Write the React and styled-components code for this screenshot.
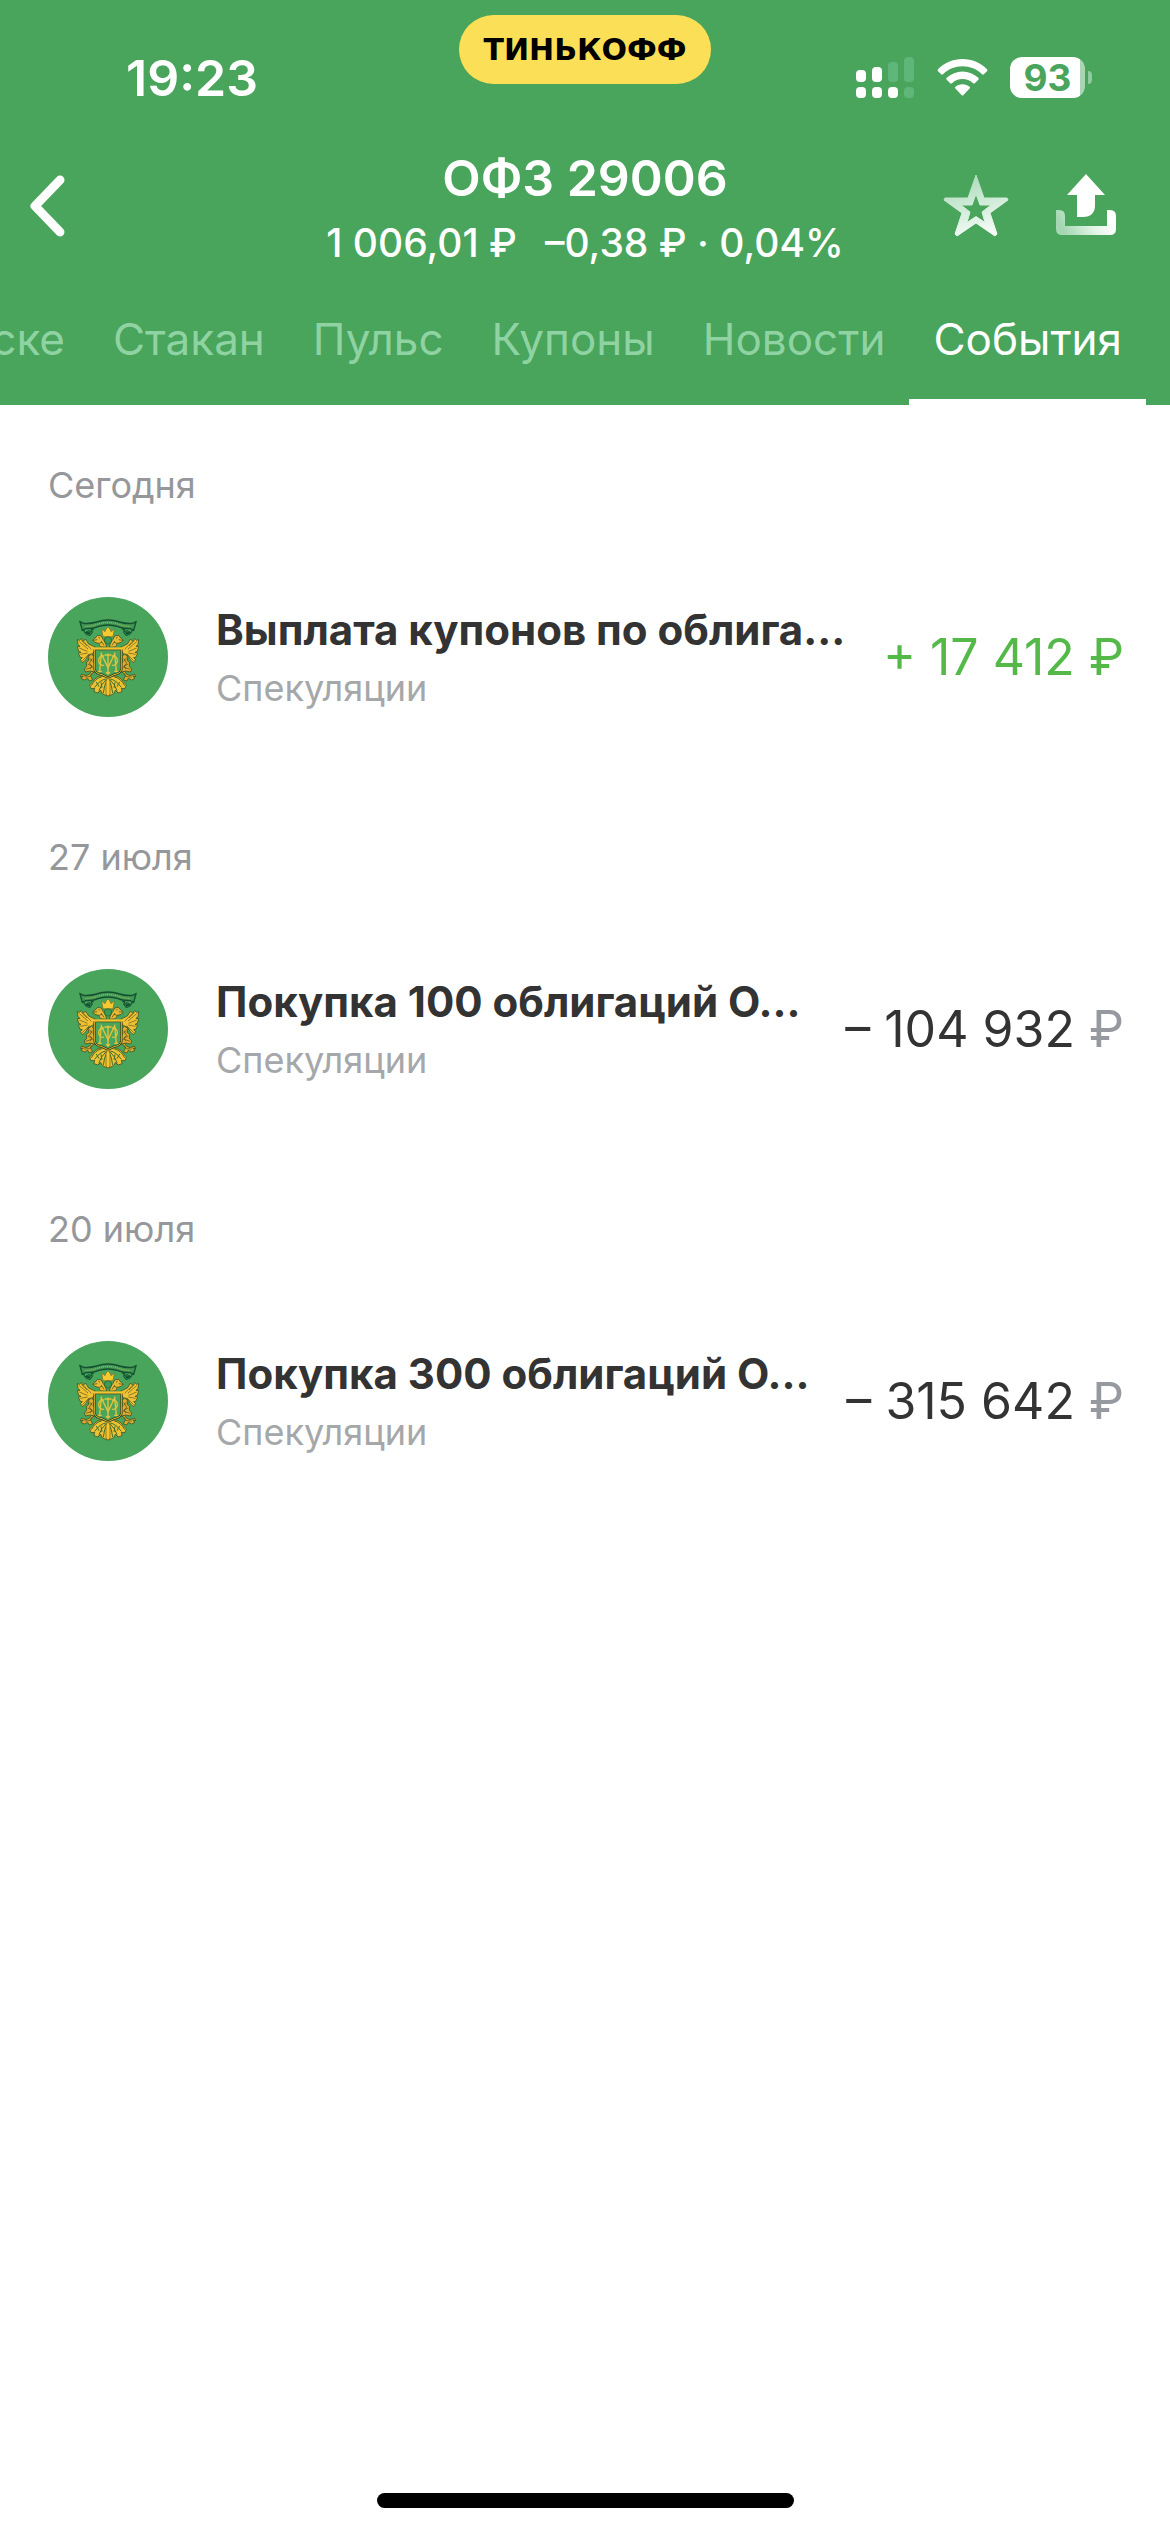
import styled, { createGlobalStyle } from "styled-components";

const GlobalStyle = createGlobalStyle`
  * {
    box-sizing: border-box;
  }

  body {
    margin: 0;
    background: #ffffff;
    font-family: Inter, "Liberation Sans", sans-serif;
  }

  button {
    padding: 0;
    border: none;
    background: none;
    color: inherit;
    font: inherit;
    cursor: pointer;
  }
`;

const Screen = styled.div`
  min-height: 100vh;

  display: flex;
  flex-direction: column;
`;

const Header = styled.header`
  background: #49a45c;
  color: #ffffff;
`;

const StatusBar = styled.div`
  height: 148px;
  padding-top: 15px;

  display: grid;
  grid-template-columns: 1fr auto 1fr;
  align-items: start;
`;

const Clock = styled.time`
  padding: 32px 0 0 126px;

  font-size: 50px;
  font-weight: 600;
  line-height: 62px;
`;

const Brand = styled.div`
  height: 69px;
  padding: 0 24px;
  border-radius: 35px;
  background: #fbdf56;
  color: #000000;

  font-family: "DejaVu Sans", sans-serif;
  font-size: 30px;
  font-weight: 700;
  line-height: 69px;
`;

const StatusIcons = styled.div`
  padding: 42px 78px 0 0;

  display: flex;
  justify-content: flex-end;
  gap: 22px;
`;

const Battery = styled.div`
  display: flex;
  align-items: center;
  gap: 3px;
`;

const BatteryLevel = styled.div`
  width: 75px;
  height: 41px;
  border-radius: 12px;
  background: linear-gradient(to right, #ffffff 93%, #a9d5b3 93%);
  color: #49a45c;

  font-size: 37px;
  font-weight: 700;
  line-height: 41px;
  text-align: center;
`;

const BatteryTip = styled.span`
  width: 4px;
  height: 13px;
  border-radius: 0 4px 4px 0;
  background: #8fcb9c;
`;

const NavBar = styled.nav`
  padding: 0 52px 0 26px;

  display: grid;
  grid-template-columns: 1fr auto 1fr;
  align-items: center;
`;

const IconButton = styled.button`
  && {
    padding-bottom: 4px;
  }

  display: flex;
  justify-self: start;
`;

const Actions = styled.div`
  display: flex;
  justify-content: flex-end;
  gap: 44px;
`;

const Heading = styled.div`
  padding-left: 26px;

  display: flex;
  flex-direction: column;
  align-items: center;
  gap: 12px;
`;

const Title = styled.h1`
  margin: 0;

  font-size: 50px;
  font-weight: 600;
  line-height: 60px;
`;

const Price = styled.p`
  margin: 0;

  display: flex;
  gap: 28px;

  font-size: 39px;
  font-weight: 500;
  line-height: 46px;
  white-space: nowrap;
`;

const Tabs = styled.div`
  padding-right: 24px;
  overflow: hidden;

  display: flex;
  justify-content: flex-end;
`;

const Tab = styled.button`
  && {
    flex: none;
    padding: 46px 24px 33px;
    border-bottom: 6px solid ${({ $active }) => ($active ? "#ffffff" : "transparent")};
    color: ${({ $active }) => ($active ? "#ffffff" : "#8fd3a3")};

    font-size: 44px;
    line-height: 54px;
  }
`;

const Day = styled.section`
  padding: 58px 46px 60px 48px;

  display: flex;
  flex-direction: column;
  gap: 90px;
`;

const DayTitle = styled.h2`
  margin: 0;
  color: #95979b;

  font-size: 36px;
  font-weight: 400;
  line-height: 44px;
`;

const Operation = styled.article`
  display: flex;
  align-items: center;
`;

const OperationText = styled.div`
  min-width: 0;
  margin-left: 48px;
  flex: 1;

  display: flex;
  flex-direction: column;
  gap: 10px;
`;

const OperationName = styled.h3`
  margin: 0;
  color: #333333;

  font-size: 42px;
  font-weight: 700;
  line-height: 52px;
  white-space: nowrap;
`;

const Account = styled.p`
  margin: 0;
  color: #a5a7aa;

  font-size: 36px;
  line-height: 44px;
`;

const Amount = styled.div`
  color: ${({ $income }) => ($income ? "#54b948" : "#333333")};

  font-size: 50px;
  line-height: 60px;
  white-space: nowrap;
`;

const Currency = styled.span`
  color: ${({ $income }) => ($income ? "inherit" : "#9699a0")};
`;

const HomeIndicator = styled.div`
  width: 417px;
  height: 15px;
  margin: auto auto 24px;
  border-radius: 8px;
  background: #000000;
`;

const tabs = ["ске", "Стакан", "Пульс", "Купоны", "Новости", "События"];

const days = [
  { date: "Сегодня", name: "Выплата купонов по облига...", amount: "+ 17 412", income: true },
  { date: "27 июля", name: "Покупка 100 облигаций О...", amount: "– 104 932" },
  { date: "20 июля", name: "Покупка 300 облигаций О...", amount: "– 315 642" },
];

const SignalIcon = () => (
  <svg width="59" height="41" viewBox="0 0 59 41" fill="#fff" aria-hidden="true">
    <rect x="0" y="13" width="10" height="12" rx="4" />
    <rect x="16" y="10" width="10" height="15" rx="4" />
    <rect x="32" y="5" width="10" height="20" rx="4" fill="#5eb778" />
    <rect x="48" y="0" width="10" height="25" rx="4" fill="#5eb778" />
    <rect x="0" y="30" width="10" height="11" rx="4" />
    <rect x="16" y="30" width="10" height="11" rx="4" />
    <rect x="32" y="30" width="10" height="11" rx="4" />
    <rect x="48" y="30" width="10" height="11" rx="4" fill="#5eb778" />
  </svg>
);

const WifiIcon = () => (
  <svg width="51" height="41" viewBox="0 0 51 41" fill="#fff" aria-hidden="true">
    <path d="M25.500 2C35 2 44 6 50 12.200Q51 13.200 50 14.200L46.800 17.300Q46 18 45 17.200C39.500 12 33 9.300 25.500 9.300S11.500 12 6 17.200Q5 18 4.200 17.300L1 14.200Q0 13.200 1 12.200C7 6 16 2 25.500 2Z" />
    <path d="M25.500 14.500C31.500 14.500 37 16.800 41.300 20.800Q42.300 21.800 41.300 22.800L37.800 26.200Q37 27 36 26.200C33 23.400 29.500 22 25.500 22S18 23.400 15 26.200Q14 27 13.200 26.200L9.700 22.800Q8.700 21.800 9.700 20.800C14 16.800 19.500 14.500 25.500 14.500Z" />
    <path d="M25.500 27.200C28.400 27.200 30.700 28.100 32.600 29.700Q33.600 30.600 32.600 31.600L26.500 38Q25.500 39 24.500 38L18.400 31.600Q17.400 30.600 18.400 29.700C20.300 28.100 22.600 27.200 25.500 27.200Z" />
  </svg>
);

const BackIcon = () => (
  <svg width="40" height="64" viewBox="0 0 40 64" fill="none" aria-hidden="true">
    <path d="M34 7L9 33L34 59" stroke="#fff" strokeWidth="9" strokeLinecap="round" strokeLinejoin="round" />
  </svg>
);

const StarIcon = () => (
  <svg width="68" height="64" viewBox="0 0 68 64" aria-hidden="true">
    <defs>
      <linearGradient id="star" x1="0.300" y1="0" x2="0.600" y2="1">
        <stop offset="0" stopColor="#a9dbb8" />
        <stop offset="1" stopColor="#f7fcf8" />
      </linearGradient>
    </defs>
    <path
      d="M34 2L42 25H65L66 27L48 40L55 61L53 63L34 50L15 63L13 61L20 40L2 27L3 25H26Z M34 21L30 32H19L28 39L25 49.500L34 43.500L43 49.500L40 39L49 32H38Z"
      fill="url(#star)"
      fillRule="evenodd"
      stroke="url(#star)"
      strokeLinejoin="round"
    />
  </svg>
);

const ShareIcon = () => (
  <svg width="64" height="64" viewBox="0 0 64 64" aria-hidden="true">
    <defs>
      <linearGradient id="tray" x1="0" y1="0.200" x2="1" y2="0">
        <stop offset="0" stopColor="#a5d8b2" />
        <stop offset="0.500" stopColor="#e3f4e8" />
        <stop offset="0.850" stopColor="#fff" />
      </linearGradient>
    </defs>
    <path d="M32 1L51 22H41V32Q41 44 29 44H23V22H13Z" fill="#fff" />
    <path d="M2 37H5Q11 37 11 43V53H53V37H56Q62 37 62 43V56Q62 62 56 62H8Q2 62 2 56Z" fill="url(#tray)" />
  </svg>
);

// One wing, head and leg of the eagle; the other half is its mirror image
const EagleHalf = () => (
  <>
    <path d="M199 203L176 192L166 177L160 184L154 176L148 181L142 179L144 193L150 199L142 200L146 214L153 217L145 220L151 232L157 233L151 239L158 248L167 239L176 225L188 221Z" fill="#efc135" />
    <path d="M148 185L174 207M148 204L172 214M151 223L173 219M157 242L178 221M161 184L184 208M154 181L171 198" stroke="#5d561c" />
    <path d="M224 201L211 200L206 190L194 187L188 180L196 174L203 166L214 168L219 178L226 188L230 201Z" fill="#e9bb34" />
    <path d="M190 181L202 179M205 172L210 175M213 183L222 196M207 190L216 187" stroke="#33401a" />
    <path d="M184 222L192 230L191 246L199 265L193 277L181 273L166 276L163 267L170 259L169 247L177 241L174 231Z" fill="#dcae30" />
    <path d="M178 233L187 244M173 252L186 258L181 267M187 236L178 250L193 267M168 268L185 262" stroke="#4a4516" />
    <path d="M191 276L181 288L188 299L178 303L173 295L163 300L153 295L160 288L151 290L155 282L168 287L179 282L184 274Z" fill="#dcae30" />
    <path d="M163 291L178 290L186 280" stroke="#4a4516" />
    <path d="M232 292Q204 280 189 304L179 315L183 326L194 325L192 335L204 339L212 331L217 341L232 348Z" fill="#efc135" />
    <path d="M227 297Q210 300 194 322M229 298Q213 313 206 334M231 300Q222 317 220 339M215 291Q196 294 184 317M199 306L207 320M213 307L216 324" stroke="#3d6f28" strokeWidth="3" />
    <path d="M159 146L165 158L175 152L188 155L180 167L168 163L162 154Z" fill="#267b47" stroke="#155b35" strokeWidth="3" />
    <path d="M169 158L180 160M183 151L191 146" stroke="#123f29" strokeWidth="4" />
  </>
);

const EmblemIcon = () => (
  <svg width="120" height="120" viewBox="54 51 360 360" fill="none" aria-hidden="true">
    <circle cx="234" cy="231" r="180" fill="#49a45c" />
    <g stroke="#33401a" strokeWidth="2" strokeLinejoin="round">
      <EagleHalf />
      <g transform="matrix(-1 0 0 1 468 0)">
        <EagleHalf />
      </g>
    </g>
    <path d="M150 125L160 130Q180 132 199 126Q234 114 269 126Q288 132 308 130L318 125L311 151L301 146Q278 146 264 140Q234 130 204 140Q190 146 167 146L157 151Z" fill="#3f9655" stroke="#12502f" strokeWidth="4" />
    <path d="M166 139Q188 139 204 132Q234 123 264 132Q280 139 302 139" stroke="#a4b64b" strokeWidth="4" strokeDasharray="3 3" />
    <path d="M219 170L215 147L225 155L229 146L234 141L239 146L243 155L253 147L249 170Z" fill="#f6c832" stroke="#80701e" strokeWidth="2" />
    <path d="M224 175L234 170L244 175V187L234 193L224 187Z" fill="#3c9c55" stroke="#245b2a" strokeWidth="2" />
    <path d="M194 207H274V269Q271 281 252 284L234 293L216 284Q197 281 194 269Z" fill="#49a45c" stroke="#33401a" strokeWidth="7" />
    <path d="M194 207H274V269Q271 281 252 284L234 293L216 284Q197 281 194 269Z" stroke="#dcb233" strokeWidth="3" />
    <path d="M189 205H279" stroke="#f3c42f" strokeWidth="6" />
    <g stroke="#e4c43b" strokeWidth="4" strokeLinecap="round">
      <path d="M209 274L214 222L234 263L254 222L259 274M205 274H214M254 274H263" />
      <path d="M234 222V279M225 225H243M229 277L234 283L239 277" />
      <path d="M221 228C201 226 201 257 221 256M247 228C267 226 267 257 247 256" />
    </g>
    <path d="M234 290L240 304V342L234 349L228 342V304Z" fill="#f2c431" stroke="#6b5a16" strokeWidth="2" />
  </svg>
);

const App = () => {
  return (
    <>
      <GlobalStyle />
      <Screen>
        <Header>
          <StatusBar>
            <Clock>19:23</Clock>
            <Brand>ТИНЬКОФФ</Brand>
            <StatusIcons>
              <SignalIcon />
              <WifiIcon />
              <Battery>
                <BatteryLevel>93</BatteryLevel>
                <BatteryTip />
              </Battery>
            </StatusIcons>
          </StatusBar>

          <NavBar>
            <IconButton type="button" aria-label="Назад">
              <BackIcon />
            </IconButton>
            <Heading>
              <Title>ОФЗ 29006</Title>
              <Price>
                <span>1 006,01 ₽</span>
                <span>–0,38 ₽ · 0,04%</span>
              </Price>
            </Heading>
            <Actions>
              <IconButton type="button" aria-label="В избранное">
                <StarIcon />
              </IconButton>
              <IconButton type="button" aria-label="Поделиться">
                <ShareIcon />
              </IconButton>
            </Actions>
          </NavBar>

          <Tabs role="tablist">
            {tabs.map((tab) => (
              <Tab
                key={tab}
                type="button"
                role="tab"
                aria-selected={tab === "События"}
                $active={tab === "События"}
              >
                {tab}
              </Tab>
            ))}
          </Tabs>
        </Header>

        <main>
          {days.map(({ date, name, amount, income }) => (
            <Day key={date}>
              <DayTitle>{date}</DayTitle>
              <Operation>
                <EmblemIcon />
                <OperationText>
                  <OperationName>{name}</OperationName>
                  <Account>Спекуляции</Account>
                </OperationText>
                <Amount $income={income}>
                  {amount} <Currency $income={income}>₽</Currency>
                </Amount>
              </Operation>
            </Day>
          ))}
        </main>

        <HomeIndicator />
      </Screen>
    </>
  );
};

export default App;
